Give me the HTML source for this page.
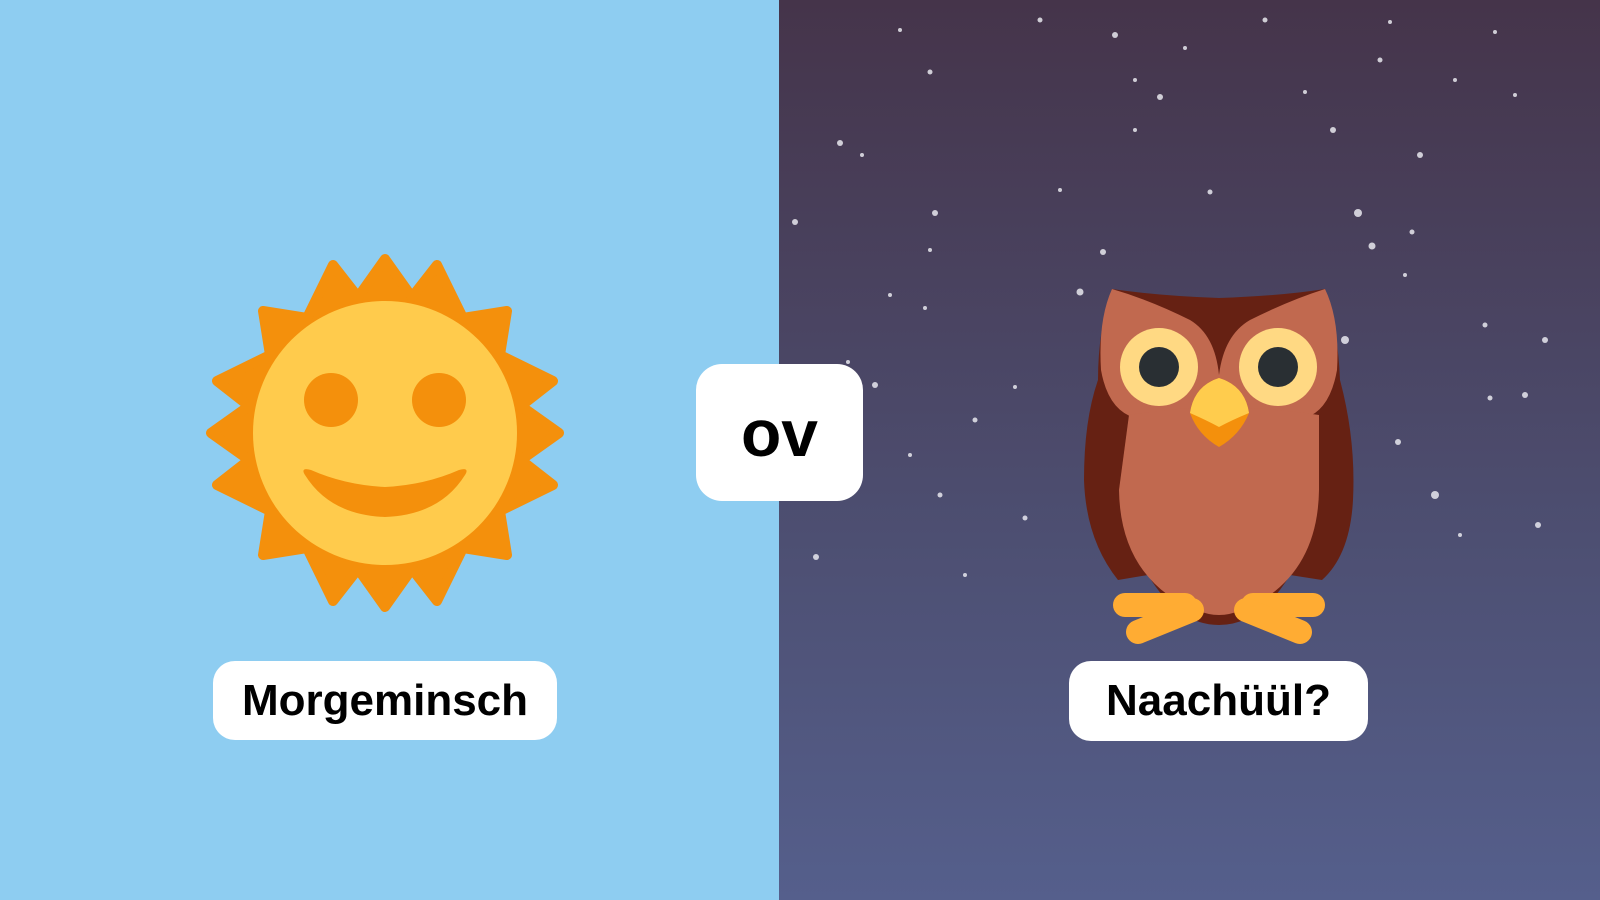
<!DOCTYPE html>
<html><head><meta charset="utf-8"><style>
html,body{margin:0;padding:0}
body{width:1600px;height:900px;position:relative;overflow:hidden;font-family:"Liberation Sans",sans-serif}
.l{position:absolute;left:0;top:0;width:779px;height:900px;background:#8ecdf1}
.r{position:absolute;left:779px;top:0;width:821px;height:900px;background:linear-gradient(#45344a,#4d4f72 60%,#555f8c)}
.box{position:absolute;background:#fff;border-radius:22px;display:flex;align-items:center;justify-content:center;color:#000;font-weight:bold}
svg{position:absolute;left:0;top:0}
</style></head><body>
<div class="l"></div><div class="r"></div>
<svg width="1600" height="900" viewBox="0 0 1600 900">
<g fill="#e8e8ee" opacity="0.85">
<circle cx="900" cy="30" r="2"/><circle cx="1040" cy="20" r="2.5"/><circle cx="1115" cy="35" r="3"/><circle cx="1185" cy="48" r="2"/><circle cx="1265" cy="20" r="2.5"/><circle cx="1390" cy="22" r="2"/><circle cx="1495" cy="32" r="2"/>
<circle cx="930" cy="72" r="2.5"/><circle cx="1135" cy="80" r="2"/><circle cx="1160" cy="97" r="3"/><circle cx="1305" cy="92" r="2"/><circle cx="1380" cy="60" r="2.5"/><circle cx="1455" cy="80" r="2"/><circle cx="1515" cy="95" r="2"/>
<circle cx="840" cy="143" r="3"/><circle cx="862" cy="155" r="2"/><circle cx="1135" cy="130" r="2"/><circle cx="1333" cy="130" r="3"/><circle cx="1420" cy="155" r="3"/>
<circle cx="795" cy="222" r="3"/><circle cx="935" cy="213" r="3"/><circle cx="1060" cy="190" r="2"/><circle cx="1210" cy="192" r="2.5"/><circle cx="1358" cy="213" r="4"/><circle cx="1412" cy="232" r="2.5"/>
<circle cx="1103" cy="252" r="3"/><circle cx="1372" cy="246" r="3.5"/><circle cx="930" cy="250" r="2"/><circle cx="1080" cy="292" r="3.5"/><circle cx="1405" cy="275" r="2"/>
<circle cx="890" cy="295" r="2"/><circle cx="925" cy="308" r="2"/><circle cx="1345" cy="340" r="4"/><circle cx="1485" cy="325" r="2.5"/><circle cx="1545" cy="340" r="3"/>
<circle cx="848" cy="362" r="2"/><circle cx="875" cy="385" r="3"/><circle cx="1015" cy="387" r="2"/><circle cx="1490" cy="398" r="2.5"/><circle cx="1525" cy="395" r="3"/>
<circle cx="975" cy="420" r="2.5"/><circle cx="1398" cy="442" r="3"/><circle cx="910" cy="455" r="2"/><circle cx="940" cy="495" r="2.5"/><circle cx="1435" cy="495" r="4"/>
<circle cx="1025" cy="518" r="2.5"/><circle cx="1538" cy="525" r="3"/><circle cx="816" cy="557" r="3"/><circle cx="1460" cy="535" r="2"/><circle cx="965" cy="575" r="2"/>
</g>
<g transform="translate(385,433)">
<g fill="#f4900c" stroke="#f4900c" stroke-width="10" stroke-linejoin="round">
<polygon points="0,-174 27,-136 52,-168 78,-115 122,-122 115,-78 168,-52 136,-27 174,0 136,27 168,52 115,78 122,122 78,115 52,168 27,136 0,174 -27,136 -52,168 -78,115 -122,122 -115,78 -168,52 -136,27 -174,0 -136,-27 -168,-52 -115,-78 -122,-122 -78,-115 -52,-168 -27,-136"/>
</g>
<circle r="132" fill="#ffcb4c"/>
<circle cx="-54" cy="-33" r="27" fill="#f4900c"/>
<circle cx="54" cy="-33" r="27" fill="#f4900c"/>
<path d="M-80,42 Q-85,34 -74,37 Q-40,52 0,54 Q40,52 74,37 Q85,34 80,42 Q55,82 0,84 Q-55,82 -80,42Z" fill="#f4900c"/>
</g>
<g>
<path d="M1112,289 Q1160,296 1219,298 Q1280,296 1325,289 Q1338,330 1340,380 Q1356,440 1353,500 Q1350,555 1322,580 L1290,575 Q1260,625 1219,625 Q1178,625 1148,575 L1118,580 Q1086,540 1084,480 Q1084,420 1098,380 Q1098,330 1112,289Z" fill="#662113"/>
<path d="M1112,289 Q1150,300 1190,320 Q1215,335 1219,375 Q1224,335 1250,320 Q1290,300 1325,289 Q1340,320 1337,370 Q1330,410 1305,418 Q1290,450 1219,450 Q1150,450 1135,418 Q1108,410 1101,370 Q1098,320 1112,289Z" fill="#c1694f"/>
<path d="M1129,415 Q1220,400 1319,415 L1319,490 Q1318,560 1270,595 Q1240,615 1219,615 Q1198,615 1168,595 Q1120,560 1119,490Z" fill="#c1694f"/>
<circle cx="1159" cy="367" r="39" fill="#ffd983"/>
<circle cx="1278" cy="367" r="39" fill="#ffd983"/>
<circle cx="1159" cy="367" r="20" fill="#292f33"/>
<circle cx="1278" cy="367" r="20" fill="#292f33"/>
<path d="M1219,378 Q1245,386 1249,413 Q1240,435 1219,447 Q1198,435 1190,413 Q1194,386 1219,378Z" fill="#f4900c"/>
<path d="M1219,378 Q1245,386 1249,413 Q1232,420 1219,427 Q1206,420 1190,413 Q1194,386 1219,378Z" fill="#ffcc4d"/>
<g stroke="#ffac33" stroke-width="24" stroke-linecap="round" fill="none">
<path d="M1125,605 L1185,605"/><path d="M1138,632 L1192,610"/>
<path d="M1313,605 L1253,605"/><path d="M1300,632 L1246,610"/>
</g>
</g>
</svg>
<div class="box" style="left:696px;top:364px;width:167px;height:137px;font-size:66px;border-radius:26px">ov</div>
<div class="box" style="left:213px;top:661px;width:344px;height:79px;font-size:44px">Morgeminsch</div>
<div class="box" style="left:1069px;top:661px;width:299px;height:80px;font-size:44px">Naachüül?</div>
</body></html>
